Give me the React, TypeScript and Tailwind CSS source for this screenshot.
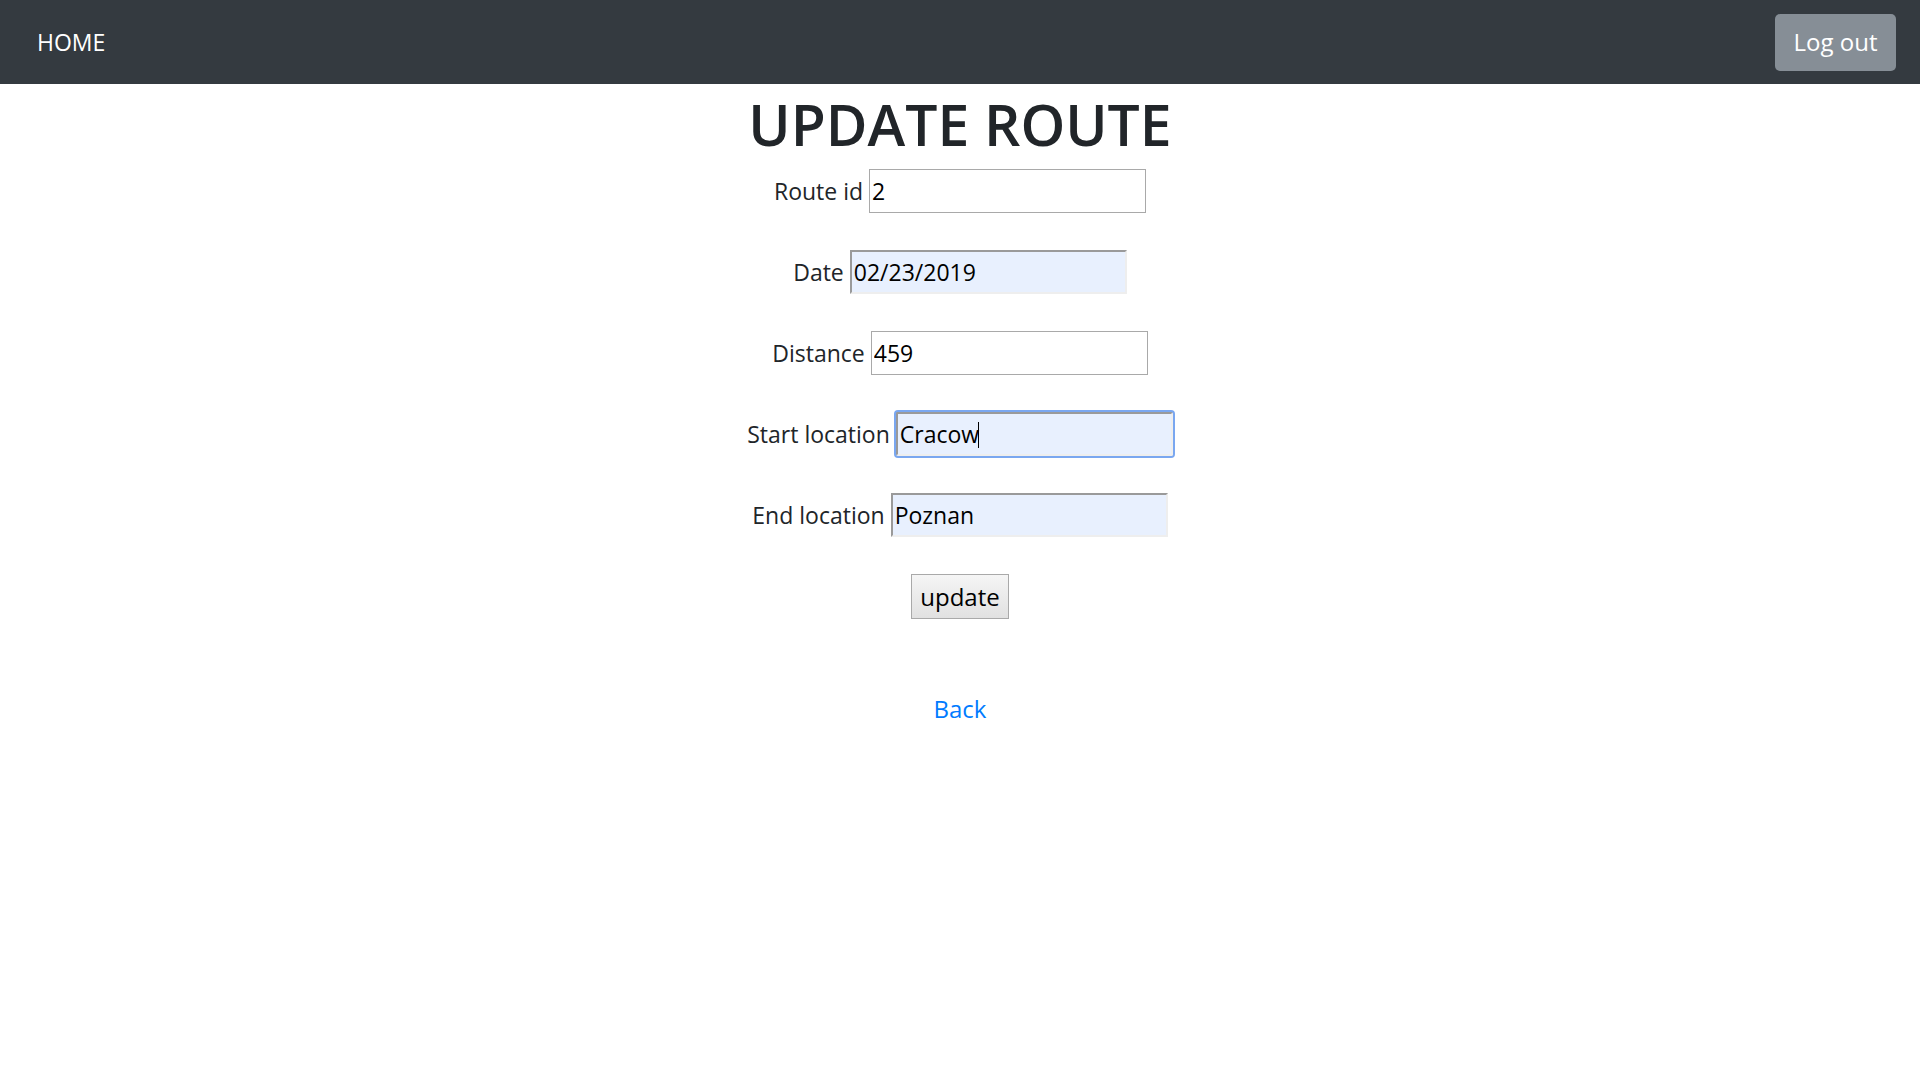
import React from "react";

const Field = ({
  label,
  value,
  variant = "plain",
}: {
  label: string;
  value: string;
  variant?: "plain" | "filled" | "focused";
}) => {
  const base =
    "h-[44px] w-[277px] px-[2px] text-[23px] text-black outline-none font-['Open_Sans',sans-serif]";
  const styles = {
    plain: "border border-[#a9a9a9] bg-white",
    filled:
      "border-2 border-t-[#9a9a9a] border-l-[#9a9a9a] border-b-[#eeeeee] border-r-[#eeeeee] bg-[#e8f0fe]",
    focused:
      "border-2 border-t-[#9a9a9a] border-l-[#9a9a9a] border-b-[#eeeeee] border-r-[#eeeeee] bg-[#e8f0fe] ring-2 ring-[#7aa7f0] rounded-[2px]",
  };
  return (
    <div className="flex items-center justify-center gap-[6px] mb-[37px]">
      <span className="text-[23px] text-[#212529]">{label}</span>
      <div className="relative">
        <input readOnly value={value} className={`${base} ${styles[variant]}`} />
        {variant === "focused" && (
          <span className="absolute left-[82px] top-[10px] h-[26px] w-px bg-black" />
        )}
      </div>
    </div>
  );
};

export default function App() {
  return (
    <div className="min-h-screen bg-white font-['Open_Sans',sans-serif]">
      <header className="flex h-[84px] items-center justify-between bg-[#343a40] pl-[37px] pr-[24px]">
        <a href="#" className="text-[23px] text-white">
          HOME
        </a>
        <button className="h-[57px] w-[121px] rounded-[5px] bg-[#868e96] text-[24px] text-white">
          Log out
        </button>
      </header>
      <main className="flex flex-col items-center">
        <h1 className="mt-[4px] mb-[9px] text-[57px] font-semibold leading-[72px] text-[#212529]">
          UPDATE ROUTE
        </h1>
        <Field label="Route id" value="2" />
        <Field label="Date" value="02/23/2019" variant="filled" />
        <Field label="Distance" value="459" />
        <Field label="Start location" value="Cracow" variant="focused" />
        <Field label="End location" value="Poznan" variant="filled" />
        <button className="h-[45px] w-[98px] border border-[#a9a9a9] bg-gradient-to-b from-[#f5f5f5] to-[#e1e1e1] text-[24px] text-black">
          update
        </button>
        <a href="#" className="mt-[72px] text-[24px] text-[#007bff]">
          Back
        </a>
      </main>
    </div>
  );
}
